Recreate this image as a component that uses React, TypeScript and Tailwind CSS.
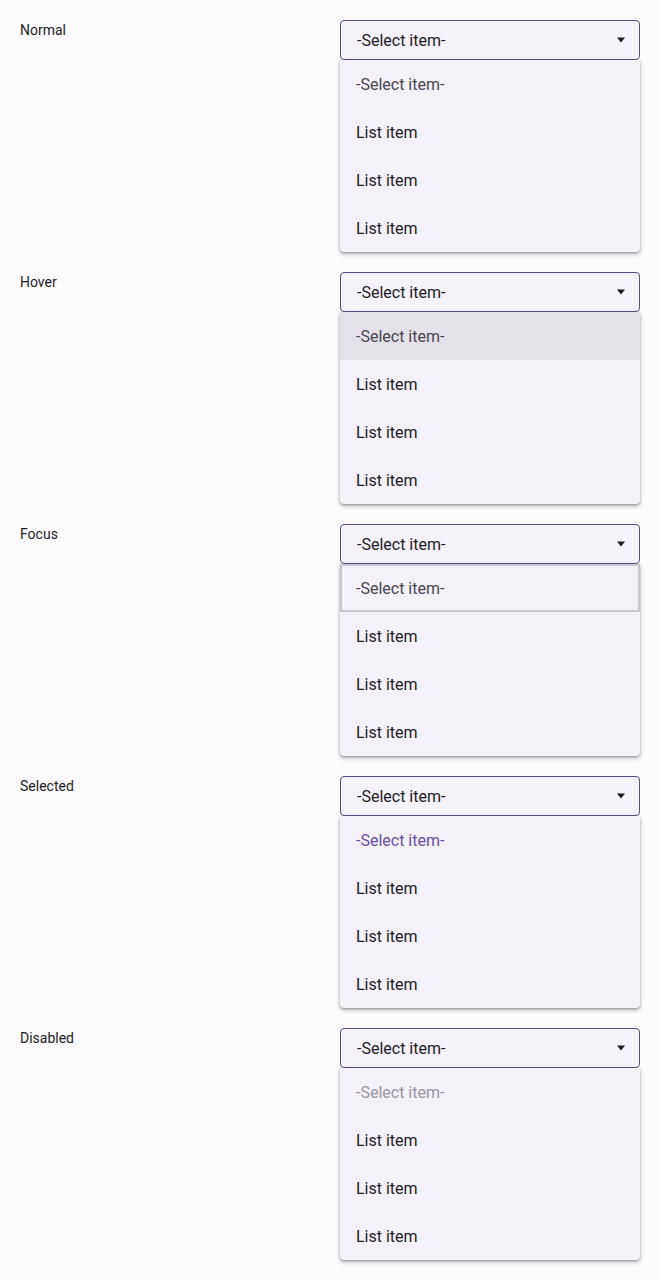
import React from 'react'

type Variant = 'normal' | 'hover' | 'focus' | 'selected' | 'disabled'

const sections: { label: string; variant: Variant }[] = [
  { label: 'Normal', variant: 'normal' },
  { label: 'Hover', variant: 'hover' },
  { label: 'Focus', variant: 'focus' },
  { label: 'Selected', variant: 'selected' },
  { label: 'Disabled', variant: 'disabled' },
]

function FirstItem({ variant }: { variant: Variant }) {
  if (variant === 'hover') {
    return (
      <div className="h-12 flex items-center px-4 pt-[2px] bg-[#e5e1e8] text-[#49454f]">-Select item-</div>
    )
  }
  if (variant === 'focus') {
    return (
      <div className="h-12 flex items-center px-[14px] pt-[2px] border-2 border-[#cac7cf] text-[#49454f]">
        -Select item-
      </div>
    )
  }
  if (variant === 'selected') {
    return <div className="h-12 flex items-center px-4 pt-[2px] text-[#6750a4]">-Select item-</div>
  }
  if (variant === 'disabled') {
    return <div className="h-12 flex items-center px-4 pt-[2px] text-[#9a969f]">-Select item-</div>
  }
  return <div className="h-12 flex items-center px-4 pt-[2px] text-[#49454f]">-Select item-</div>
}

function Dropdown({ variant }: { variant: Variant }) {
  return (
    <div className="w-[300px] flex flex-col">
      <div className="h-10 flex items-center justify-between pl-4 pr-[13px] border border-[#5b4a8b] rounded bg-[#f5f2f9] text-[#1c1b1f] text-base">
        <span className="pt-[2px]">-Select item-</span>
        <svg width="10" height="6" viewBox="0 0 10 6">
          <path d="M1 0.5 L9 0.5 L5 5.5 Z" fill="#1c1b1f" />
        </svg>
      </div>
      <div className="flex flex-col bg-[#f4f1f8] rounded-b shadow-[0_2px_4px_rgba(0,0,0,0.3),0_1px_2px_rgba(0,0,0,0.2)] text-base overflow-hidden">
        <FirstItem variant={variant} />
        {[0, 1, 2].map((i) => (
          <div key={i} className="h-12 flex items-center px-4 pt-[2px] text-[#1c1b1f]">
            List item
          </div>
        ))}
      </div>
    </div>
  )
}

export default function App() {
  return (
    <div
      className="min-h-[1280px] w-[660px] bg-[#fdfbfe] px-5 pt-5 flex flex-col gap-5"
      style={{ fontFamily: 'Roboto, "Liberation Sans", sans-serif' }}
    >
      {sections.map((s) => (
        <div key={s.label} className="flex justify-between">
          <div className="text-sm text-[#1c1b1f]">{s.label}</div>
          <Dropdown variant={s.variant} />
        </div>
      ))}
    </div>
  )
}
